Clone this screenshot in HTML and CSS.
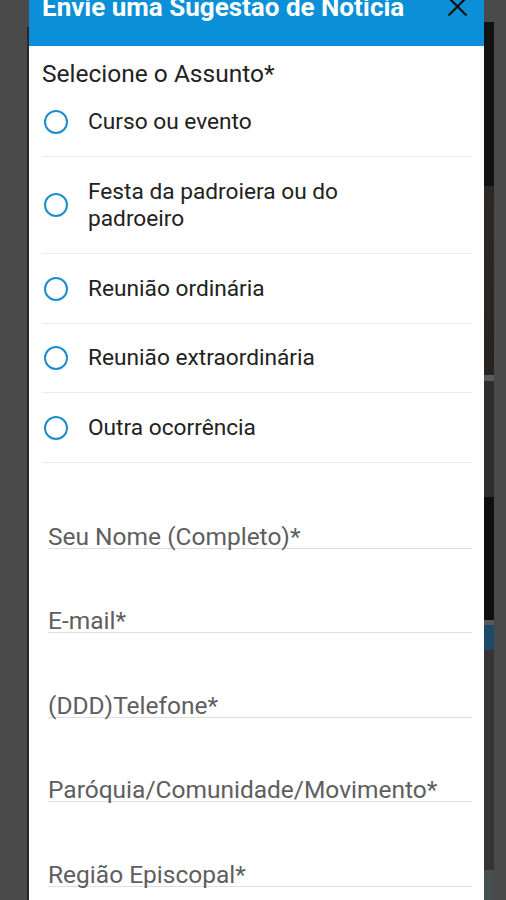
FILE: index.html
```html
<!doctype html>
<html lang="pt-BR">
<head>
	<meta charset="UTF-8">
	<title>Envie uma Sugestão de Notícia</title>
	<link rel="stylesheet" href="styles.css">
</head>
<body>
	<div class="screen">
		<div class="edge-left"></div>
		<div class="modal">
			<div class="modal-head">
				<h2>Envie uma Sugestão de Notícia</h2>
				<svg class="close" viewBox="0 0 21 21" width="21" height="21">
					<path d="M1.5 1.5 L19.5 19.5 M19.5 1.5 L1.5 19.5" stroke="#111" stroke-width="2.2" fill="none"/>
				</svg>
			</div>
			<div class="modal-body">
				<p class="subject">Selecione o Assunto*</p>
				<ul class="options">
					<li><label><input type="radio" name="assunto"><span>Curso ou evento</span></label></li>
					<li><label><input type="radio" name="assunto"><span>Festa da padroiera ou do padroeiro</span></label></li>
					<li><label><input type="radio" name="assunto"><span>Reunião ordinária</span></label></li>
					<li><label><input type="radio" name="assunto"><span>Reunião extraordinária</span></label></li>
					<li><label><input type="radio" name="assunto"><span>Outra ocorrência</span></label></li>
				</ul>
				<div class="fields">
					<div class="field"><span>Seu Nome (Completo)*</span></div>
					<div class="field"><span>E-mail*</span></div>
					<div class="field"><span>(DDD)Telefone*</span></div>
					<div class="field"><span>Paróquia/Comunidade/Movimento*</span></div>
					<div class="field"><span>Região Episcopal*</span></div>
				</div>
			</div>
		</div>
		<div class="behind">
			<div class="seg seg-top"></div>
			<div class="seg seg-black1"></div>
			<div class="seg seg-brown"></div>
			<div class="seg seg-line"></div>
			<div class="seg seg-dark1"></div>
			<div class="seg seg-black2"></div>
			<div class="seg seg-line2"></div>
			<div class="seg seg-blue"></div>
			<div class="seg seg-dark2"></div>
			<div class="seg seg-tail"></div>
		</div>
	</div>
</body>
</html>
```

FILE: styles.css
```css
html,body{
	margin: 0;
	height: 100%;
}
body{
	background: #4a4a4a;
	font-family: Roboto, "Noto Sans", sans-serif;
	overflow: hidden;
}
.screen{
	display: flex;
	height: 900px;
}
.edge-left{
	width: 2px;
	margin-left: 27px;
	margin-top: 27px;
	background: #2a2a2a;
}
.modal{
	width: 455px;
	margin-top: -20px;
	background: #fff;
	display: flex;
	flex-direction: column;
}
.modal-head{
	height: 66px;
	box-sizing: border-box;
	padding: 12.3px 16px 0 13px;
	background: #0a8fd8;
	display: flex;
	justify-content: space-between;
	align-items: flex-start;
}
.modal-head h2{
	margin: 0;
	color: #fff;
	font-size: 26px;
	line-height: 30px;
	font-weight: 700;
}
.close{
	margin-top: 3.7px;
	flex: none;
}
.modal-body{
	padding: 0 12px 0 13px;
}
.subject{
	margin: 0;
	padding-top: 12.8px;
	font-size: 24.5px;
	line-height: 29px;
	color: #222;
}
.options{
	list-style: none;
	margin: 0;
	padding: 0;
}
.options li{
	border-bottom: 1px solid #ebebeb;
}
.options label{
	display: flex;
	align-items: center;
	gap: 20px;
	padding: 20.5px 0;
}
.options input{
	appearance: none;
	-webkit-appearance: none;
	flex: none;
	width: 24px;
	height: 24px;
	margin: 0 0 0 2px;
	border: 2px solid #1b8ecb;
	border-radius: 50%;
	box-sizing: border-box;
}
.options span{
	max-width: 290px;
	font-size: 22.7px;
	line-height: 27.5px;
	color: #222;
}
.fields{
	padding: 1.8px 0 0 6px;
}
.field{
	padding-top: 61.4px;
}
.field span{
	display: block;
	height: 22px;
	line-height: 22px;
	font-size: 24.5px;
	color: #5e5e5e;
	border-bottom: 1px solid #dedede;
	white-space: nowrap;
}
.behind{
	width: 10px;
	display: flex;
	flex-direction: column;
}
.seg-top{ height: 22px; }
.seg-black1{ height: 164px; background: #121212; }
.seg-brown{ height: 189px; background: linear-gradient(#2e2825, #262321); }
.seg-line{ height: 6px; background: #5a5a5a; }
.seg-dark1{ height: 116px; background: #2e2e2e; }
.seg-black2{ height: 123px; background: #0f0f0f; }
.seg-line2{ height: 5px; background: #585858; }
.seg-blue{ height: 25px; background: #1c4a6a; }
.seg-dark2{ height: 220px; background: #343434; }
.seg-tail{ flex: 1; background: #464f50; }
```
